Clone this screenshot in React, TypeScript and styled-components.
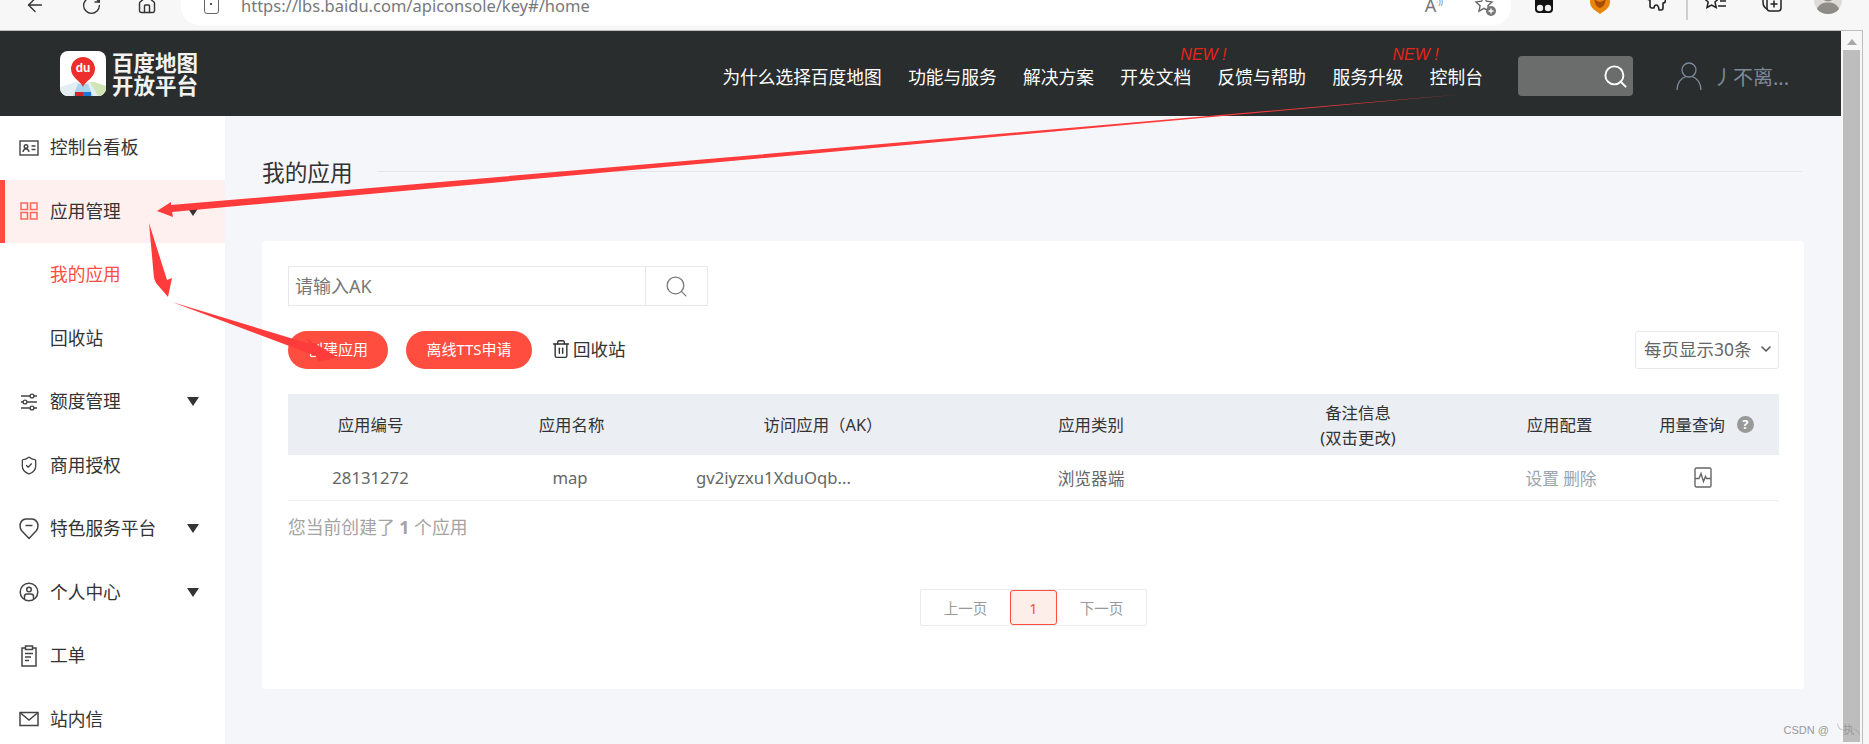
import styled, { createGlobalStyle } from 'styled-components';
import { ArrowLeft, RotateCw, Home, Search, ShieldCheck, Trash2, ChevronDown } from 'lucide-react';

const navItems = [
  { label: '为什么选择百度地图' },
  { label: '功能与服务' },
  { label: '解决方案' },
  { label: '开发文档', isNew: true },
  { label: '反馈与帮助' },
  { label: '服务升级', isNew: true },
  { label: '控制台' },
];

const IdCardIcon = () => (
  <svg width="20" height="20" viewBox="0 0 20 20" fill="none" stroke="#444" strokeWidth="1.4">
    <rect x="1" y="3" width="18" height="14" />
    <circle cx="7" cy="8.5" r="1.8" />
    <path d="M4 14c.4-2.400 1.500-3.200 3-3.200s2.600.8 3 3.200M12.500 8h4M12.500 11.500h4" />
  </svg>
);

const GridIcon = () => (
  <svg width="20" height="20" viewBox="0 0 20 20" fill="none" stroke="#ff6a5c" strokeWidth="1.5">
    <rect x="2" y="2" width="6.500" height="6.500" />
    <rect x="11.500" y="2" width="6.500" height="6.500" />
    <rect x="2" y="11.500" width="6.500" height="6.500" />
    <rect x="11.500" y="11.500" width="6.500" height="6.500" />
  </svg>
);

const SlidersIcon = () => (
  <svg width="20" height="20" viewBox="0 0 20 20" fill="none" stroke="#444" strokeWidth="1.4">
    <path d="M2 4h9M15 4h3M2 10h2M8 10h10M2 16h9M15 16h3" />
    <circle cx="13" cy="4" r="1.900" />
    <circle cx="6" cy="10" r="1.900" />
    <circle cx="13" cy="16" r="1.900" />
  </svg>
);

const TagIcon = () => (
  <svg width="20" height="22" viewBox="0 0 20 22" fill="none" stroke="#444" strokeWidth="1.5">
    <path d="M10 20.500 2.500 12.500C.5 10 .8 6 2 4c1.200-2 3-3 5-3h6c2 0 3.800 1 5 3 1.200 2 1.500 6-.5 8.500z" strokeLinejoin="round" />
    <path d="M6.500 7.500h7" />
  </svg>
);

const UserCircleIcon = () => (
  <svg width="20" height="20" viewBox="0 0 20 20" fill="none" stroke="#444" strokeWidth="1.5">
    <circle cx="10" cy="10" r="8.800" />
    <circle cx="10" cy="7.500" r="2.300" />
    <path d="M5.500 17v-2.500c0-1.500 1-2.500 2.500-2.500h4c1.500 0 2.500 1 2.500 2.500V17" />
  </svg>
);

const ClipboardIcon = () => (
  <svg width="20" height="22" viewBox="0 0 20 22" fill="none" stroke="#444" strokeWidth="1.5">
    <path d="M6.500 3H3v18h14V3h-3.500" />
    <rect x="6.500" y="1" width="7" height="3.500" />
    <path d="M6 8.500h8M6 12h6M6 15.500h4" />
  </svg>
);

const MailIcon = () => (
  <svg width="20" height="20" viewBox="0 0 20 20" fill="none" stroke="#444" strokeWidth="1.5">
    <rect x="1" y="3.500" width="18" height="13" />
    <path d="m1.500 4 8.500 7 8.500-7" />
  </svg>
);

const PulseIcon = () => (
  <svg width="18" height="21" viewBox="0 0 18 21" fill="none" stroke="#666" strokeWidth="1.4">
    <rect x="1" y="1" width="16" height="19" rx="1.500" />
    <path d="M1 11.500h4l2-5 2.500 8 2-5 1 2H17" />
  </svg>
);

const menu = [
  { label: '控制台看板', icon: <IdCardIcon /> },
  { label: '应用管理', icon: <GridIcon />, active: true, caret: true },
  { label: '我的应用', child: true, current: true },
  { label: '回收站', child: true },
  { label: '额度管理', icon: <SlidersIcon />, caret: true },
  { label: '商用授权', icon: <ShieldCheck size={21} color="#444" strokeWidth={1.6} /> },
  { label: '特色服务平台', icon: <TagIcon />, caret: true },
  { label: '个人中心', icon: <UserCircleIcon />, caret: true },
  { label: '工单', icon: <ClipboardIcon /> },
  { label: '站内信', icon: <MailIcon /> },
];

const App = () => {
  return (
    <>
      <GlobalStyle />
      <BrowserBar>
        <BrowserRow>
          <ArrowLeft size={22} color="#333" strokeWidth={1.5} />
          <RotateCw size={21} color="#333" strokeWidth={1.5} />
          <Home size={20} color="#333" strokeWidth={1.7} />
          <AddressPill>
            <AddressLeft>
              <LockBox />
              <UrlText>https://lbs.baidu.com/apiconsole/key#/home</UrlText>
            </AddressLeft>
            <AddressRight>
              <ReadAloud>
                A<sup>ᐧ))</sup>
              </ReadAloud>
              <StarPlus>
                <svg width="24" height="24" viewBox="0 0 24 24" fill="none" stroke="#666" strokeWidth="1.4">
                  <path d="m11 3 2.400 5.200 5.600.7-4.100 3.800 1.100 5.500-5-2.800-5 2.800 1.100-5.500L3 8.900l5.600-.7z" />
                  <circle cx="18" cy="18" r="5" fill="#777" stroke="none" />
                  <path d="M18 15.500v5M15.500 18h5" stroke="#fff" />
                </svg>
              </StarPlus>
            </AddressRight>
          </AddressPill>
          <ExtSlots>
            <ExtSlot>
              <svg width="20" height="22" viewBox="0 0 20 22">
                <rect x="1" y="-6" width="18" height="25" rx="4" fill="#111" />
                <circle cx="6" cy="14" r="3.200" fill="#eee" />
                <circle cx="14" cy="14" r="3.200" fill="#eee" />
              </svg>
            </ExtSlot>
            <ExtSlot>
              <svg width="22" height="22" viewBox="0 0 22 22">
                <path d="M1-4h20v12c0 6-6 9-10 12C7 17 1 14 1 8z" fill="#e8860c" />
                <path d="M5 4c3 5 9 5 12 0-1 7-3 9-6 10-3-1-5-3-6-10z" fill="#a84a08" />
              </svg>
            </ExtSlot>
            <ExtSlot>
              <svg width="20" height="22" viewBox="0 0 20 22" fill="none" stroke="#222" strokeWidth="1.600">
                <path d="M5-2v2c-2.500 0-4 1-4 3s1.500 3 3 3v6c0 1 1 2 2 2h2c0-2 1-3 2.500-3S13 14 13 16h2c1 0 2-1 2-2V9c1.500 0 2.500-1 2.500-2.500S18.500 4 17 4V-2" strokeLinejoin="round" />
              </svg>
            </ExtSlot>
            <ExtDivider />
            <ExtSlot>
              <svg width="22" height="20" viewBox="0 0 22 20" fill="none" stroke="#222" strokeWidth="1.500">
                <path d="M7-2 9 3l5 .5-4 3.500 1.200 5.500L6.500 10 2 12.500 3.200 7-1 3.500 4 3zM14 1h7M15 6h6M13 11h8" />
              </svg>
            </ExtSlot>
            <ExtSlot>
              <svg width="22" height="22" viewBox="0 0 22 22" fill="none" stroke="#222" strokeWidth="1.500">
                <path d="M2-2v10c0 3 2 6 4 7" />
                <rect x="6" y="3" width="14" height="14" rx="3" />
                <path d="M13 6.500v7M9.500 10h7" />
              </svg>
            </ExtSlot>
            <ExtSlot>
              <svg width="28" height="30" viewBox="0 0 28 30">
                <circle cx="14" cy="10" r="14" fill="#dcdbd8" />
                <circle cx="14" cy="5" r="6.500" fill="#8f8c88" />
                <path d="M3 19c2-5 6-6.500 11-6.500S23 14 25 19c-2.500 3.500-6.500 5-11 5S5.500 22.500 3 19z" fill="#8f8c88" />
              </svg>
            </ExtSlot>
          </ExtSlots>
        </BrowserRow>
      </BrowserBar>

      <Frame>
        <Page>
          <Header>
            <Logo>
              <LogoMark>
                <svg width="46" height="45" viewBox="0 0 46 45">
                  <defs>
                    <clipPath id="logoClip">
                      <rect width="46" height="45" rx="8" />
                    </clipPath>
                  </defs>
                  <g clipPath="url(#logoClip)">
                    <rect width="46" height="45" fill="#fff" />
                    <path d="M0 36 16 31h14l16 5v9H0z" fill="#e3eef2" />
                    <path d="M30 31h4l12 4v10H38z" fill="#cfe3b4" />
                    <path d="M18 33h10l5 12H13z" fill="#a9d4ee" />
                    <rect x="15" y="41" width="8" height="4" fill="#d8232a" />
                    <rect x="23" y="41" width="8" height="4" fill="#1e78d8" />
                    <path d="M23 36c-2-6-12-9-12-18a12 12 0 0 1 24 0c0 9-10 12-12 18z" fill="#ee2d2d" />
                    <text x="23" y="21" textAnchor="middle" fill="#fff" fontSize="12" fontWeight="700" fontFamily="Liberation Sans, sans-serif">
                      du
                    </text>
                  </g>
                </svg>
              </LogoMark>
              <LogoText>
                <span>百度地图</span>
                <span>开放平台</span>
              </LogoText>
            </Logo>
            <HeaderRight>
              <Nav>
                {navItems.map((item) => (
                  <NavItem key={item.label}>
                    {item.isNew && <NewBadge>NEW !</NewBadge>}
                    {item.label}
                  </NavItem>
                ))}
              </Nav>
              <HeaderSearch>
                <Search size={27} color="#fff" strokeWidth={1.7} />
              </HeaderSearch>
              <UserBox>
                <svg width="26" height="30" viewBox="0 0 26 30" fill="none" stroke="#7c8a99" strokeWidth="1.3">
                  <circle cx="13" cy="9" r="7" />
                  <path d="M1 29c0-7 4-12 9-13.500M25 29c0-7-4-12-9-13.500" />
                </svg>
                <UserName>丿不离...</UserName>
              </UserBox>
            </HeaderRight>
          </Header>

          <Body>
            <Sidebar>
              {menu.map((item) => (
                <MenuItem key={item.label} $active={item.active}>
                  <MenuIcon>{item.icon}</MenuIcon>
                  <MenuLabel $current={item.current}>{item.label}</MenuLabel>
                  {item.caret && <Caret />}
                </MenuItem>
              ))}
            </Sidebar>

            <Main>
              <TitleRow>
                <PageTitle>我的应用</PageTitle>
                <TitleRule />
              </TitleRow>
              <Card>
                <SearchBox>
                  <SearchInput placeholder="请输入AK" />
                  <SearchButton>
                    <Search size={25} color="#777" strokeWidth={1.2} />
                  </SearchButton>
                </SearchBox>

                <Toolbar>
                  <PrimaryButton $width={100}>创建应用</PrimaryButton>
                  <PrimaryButton $width={126}>离线TTS申请</PrimaryButton>
                  <RecycleLink>
                    <Trash2 size={20} color="#333" strokeWidth={1.7} />
                    回收站
                  </RecycleLink>
                  <PageSize>
                    每页显示30条
                    <ChevronDown size={16} color="#555" strokeWidth={2.4} />
                  </PageSize>
                </Toolbar>

                <TableHead>
                  <span>应用编号</span>
                  <NameHead>应用名称</NameHead>
                  <AkHead>访问应用（AK）</AkHead>
                  <span>应用类别</span>
                  <span>
                    备注信息
                    <br />
                    (双击更改)
                  </span>
                  <ConfigHead>应用配置</ConfigHead>
                  <UsageHead>
                    用量查询
                    <HelpDot>?</HelpDot>
                  </UsageHead>
                </TableHead>
                <TableRow>
                  <span>28131272</span>
                  <span>map</span>
                  <AkCell>gv2iyzxu1XduOqb...</AkCell>
                  <span>浏览器端</span>
                  <span />
                  <ActionCell>设置 删除</ActionCell>
                  <UsageCell>
                    <PulseIcon />
                  </UsageCell>
                </TableRow>

                <Summary>
                  您当前创建了 <b>1</b> 个应用
                </Summary>

                <Pager>
                  <PagerText>上一页</PagerText>
                  <PagerCurrent>1</PagerCurrent>
                  <PagerText>下一页</PagerText>
                </Pager>
              </Card>
            </Main>
          </Body>
        </Page>

        <ScrollTrack>
          <ScrollUp />
          <ScrollThumb />
        </ScrollTrack>
      </Frame>

      <Arrows width="1869" height="744" viewBox="0 0 1869 744">
        <polygon points="1465,94 171,205 171,202 157,211 173,217 172,212" fill="#ff3b3b" />
        <polygon points="149,223 154,278 156,283 168,297 172,278 167,280" fill="#ff3b3b" />
        <polygon points="172,302 310,344 306,338 337,357 318,362 316,356" fill="#ff3b3b" />
      </Arrows>
      <Watermark>CSDN @ ╰执╮</Watermark>
    </>
  );
};

export default App;

const GlobalStyle = createGlobalStyle`
  html, body {
    margin: 0;
    padding: 0;
    width: 1869px;
    height: 744px;
    overflow: hidden;
    background: #f7f7f7;
    font-family: "Noto Sans", "Noto Sans CJK SC", sans-serif;
  }

  * {
    box-sizing: border-box;
  }
`;

const BrowserBar = styled.div`
  height: 30px;
  overflow: hidden;
  background: #f7f7f7;
`;

const BrowserRow = styled.div`
  display: flex;
  align-items: center;
  gap: 35px;
  height: 50px;
  margin-top: -20px;
  padding-left: 24px;
`;

const AddressPill = styled.div`
  display: flex;
  align-items: center;
  justify-content: space-between;
  align-self: flex-start;
  width: 1330px;
  height: 45px;
  margin-left: -11px;
  padding: 5px 14px 0 23px;
  background: #fff;
  border-radius: 0 0 18px 18px;
`;

const AddressLeft = styled.div`
  display: flex;
  align-items: center;
  gap: 22px;
`;

const LockBox = styled.div`
  position: relative;
  width: 15px;
  height: 18px;
  border: 1.5px solid #666;
  border-radius: 3px;

  &::after {
    content: '';
    position: absolute;
    left: 5px;
    top: 6px;
    width: 2px;
    height: 2px;
    background: #555;
  }
`;

const UrlText = styled.span`
  font-size: 16.5px;
  color: #76797c;
  white-space: nowrap;
`;

const AddressRight = styled.div`
  display: flex;
  align-items: center;
  gap: 30px;
`;

const ReadAloud = styled.span`
  font-size: 18px;
  color: #777;

  sup {
    font-size: 8px;
  }
`;

const StarPlus = styled.span`
  display: flex;
`;

const ExtSlots = styled.div`
  display: flex;
  align-items: center;
  margin-left: -30px;
`;

const ExtSlot = styled.div`
  display: flex;
  justify-content: center;
  width: 56px;
`;

const ExtDivider = styled.div`
  width: 2px;
  height: 30px;
  margin: 0 0 0 2px;
  background: #cfcfcf;
`;

const Frame = styled.div`
  display: flex;
  width: 1863px;
  height: 714px;
  border-top: 1px solid #bdbdbd;
  border-right: 1px solid #bdbdbd;
`;

const Page = styled.div`
  width: 1841px;
  flex-shrink: 0;
  overflow: hidden;
`;

const Header = styled.header`
  display: flex;
  align-items: center;
  justify-content: space-between;
  height: 85px;
  padding: 0 52px 0 60px;
  background: #2a2d2e;
`;

const Logo = styled.div`
  display: flex;
  align-items: center;
  gap: 6px;
`;

const LogoMark = styled.div`
  display: flex;
`;

const LogoText = styled.div`
  display: flex;
  flex-direction: column;
  font-size: 21.5px;
  line-height: 23px;
  font-weight: 700;
  color: #f2f2f2;
  white-space: nowrap;
`;

const HeaderRight = styled.div`
  display: flex;
  align-items: center;
  margin-top: 5px;
`;

const Nav = styled.nav`
  display: flex;
  gap: 26.500px;
`;

const NavItem = styled.a`
  position: relative;
  font-size: 17.700px;
  color: #fff;
  white-space: nowrap;
`;

const NewBadge = styled.i`
  position: absolute;
  left: 60px;
  top: -17px;
  font-family: "Liberation Sans", sans-serif;
  font-size: 16px;
  color: #e8231a;
  white-space: nowrap;
`;

const HeaderSearch = styled.div`
  display: flex;
  align-items: center;
  justify-content: flex-end;
  width: 115px;
  height: 40px;
  margin-left: 35px;
  padding-right: 4px;
  background: #6b6d6d;
  border-radius: 4px;
`;

const UserBox = styled.div`
  display: flex;
  align-items: center;
  gap: 11px;
  margin-left: 43px;
`;

const UserName = styled.span`
  font-size: 20px;
  color: #7c8a99;
  white-space: nowrap;
`;

const Body = styled.div`
  display: flex;
  height: 629px;
`;

const Sidebar = styled.aside`
  width: 225px;
  flex-shrink: 0;
  background: #fff;
`;

const MenuItem = styled.div<{ $active?: boolean }>`
  display: flex;
  align-items: center;
  height: 63.500px;
  padding-left: ${(props) => (props.$active ? '14px' : '19px')};
  padding-right: 26px;
  background: ${(props) => (props.$active ? '#fdf0ee' : 'transparent')};
  border-left: ${(props) => (props.$active ? '5px solid #ff4d3f' : 'none')};
`;

const MenuIcon = styled.span`
  display: flex;
  justify-content: center;
  width: 20px;
  margin-right: 11px;
`;

const MenuLabel = styled.span<{ $current?: boolean }>`
  flex: 1;
  padding-bottom: 3px;
  font-size: 17.700px;
  color: ${(props) => (props.$current ? '#ff4d3f' : '#333')};
  white-space: nowrap;
`;

const Caret = styled.span`
  width: 0;
  height: 0;
  border-left: 6.500px solid transparent;
  border-right: 6.500px solid transparent;
  border-top: 9px solid #333;
`;

const Main = styled.main`
  flex: 1;
  padding: 36px 37px 0;
  background: #f5f6fa;
`;

const TitleRow = styled.div`
  display: flex;
  align-items: center;
  height: 42px;
  margin-bottom: 47px;
`;

const PageTitle = styled.h1`
  margin: 0;
  padding-bottom: 4px;
  font-size: 22.700px;
  font-weight: 400;
  color: #333;
`;

const TitleRule = styled.div`
  flex: 1;
  height: 1px;
  margin: -3px 2px 0 25px;
  background: #e4e6ec;
`;

const Card = styled.section`
  height: 448px;
  padding: 25px 25px 0 26px;
  background: #fff;
  border-radius: 4px;
`;

const SearchBox = styled.div`
  display: flex;
  width: 420px;
  height: 40px;
  border: 1px solid #e6e8ee;
`;

const SearchInput = styled.input`
  width: 357px;
  padding: 0 6px;
  font-family: inherit;
  font-size: 18px;
  border: none;
  border-right: 1px solid #e6e8ee;
  outline: none;

  &::placeholder {
    color: #777;
  }
`;

const SearchButton = styled.div`
  display: flex;
  flex: 1;
  align-items: center;
  justify-content: center;
`;

const Toolbar = styled.div`
  display: flex;
  align-items: center;
  height: 38px;
  margin-top: 25px;
`;

const PrimaryButton = styled.button<{ $width: number }>`
  width: ${(props) => props.$width}px;
  height: 38px;
  margin-right: 18px;
  padding: 0 0 3px;
  font-family: inherit;
  font-size: 15px;
  color: #fff;
  background: #ff4d3f;
  border: none;
  border-radius: 19px;
`;

const RecycleLink = styled.span`
  display: flex;
  align-items: center;
  gap: 2px;
  margin-left: 1px;
  padding-bottom: 3px;
  font-size: 17.500px;
  color: #333;
`;

const PageSize = styled.div`
  display: flex;
  align-items: center;
  justify-content: space-between;
  width: 144px;
  height: 38px;
  margin-left: auto;
  padding: 0 4px 3px 8px;
  font-size: 17.500px;
  color: #666;
  border: 1px solid #e6e8ee;
  border-radius: 3px;
  white-space: nowrap;
`;

const columns = '165px 234px 262px 284px 250px 150px 145px';

const TableHead = styled.div`
  display: grid;
  grid-template-columns: ${columns};
  align-items: center;
  height: 61px;
  margin-top: 25px;
  font-size: 16.400px;
  line-height: 25px;
  text-align: center;
  color: #333;
  background: #ebeef3;
`;

const NameHead = styled.span`
  padding-left: 3px;
`;

const AkHead = styled.span`
  padding-left: 10px;
`;

const ConfigHead = styled.span`
  padding-left: 3px;
`;

const UsageHead = styled.span`
  display: flex;
  align-items: center;
  justify-content: center;
  gap: 12px;
  padding-left: 2px;
`;

const HelpDot = styled.span`
  display: flex;
  align-items: center;
  justify-content: center;
  width: 17px;
  height: 17px;
  font-size: 13px;
  font-weight: 700;
  color: #fff;
  background: #999;
  border-radius: 50%;
`;

const TableRow = styled.div`
  display: grid;
  grid-template-columns: ${columns};
  align-items: center;
  height: 46px;
  font-size: 16.700px;
  text-align: center;
  color: #666;
  border-bottom: 1px solid #eef0f3;
`;

const AkCell = styled.span`
  padding-left: 9px;
  text-align: left;
`;

const ActionCell = styled.span`
  padding-left: 6px;
  color: #9aa5b1;
`;

const UsageCell = styled.span`
  display: flex;
  justify-content: center;
  padding-right: 6px;
`;

const Summary = styled.div`
  height: 24px;
  margin-top: 14px;
  font-size: 17.800px;
  line-height: 24px;
  color: #a3a3a3;
`;

const Pager = styled.div`
  display: flex;
  align-items: center;
  width: 227px;
  height: 37px;
  margin: 50px 0 0 632px;
  border: 1px solid #ebebeb;
  border-radius: 2px;
`;

const PagerText = styled.span`
  flex: 1;
  font-size: 14.500px;
  text-align: center;
  color: #999;
`;

const PagerCurrent = styled.span`
  display: flex;
  align-items: center;
  justify-content: center;
  width: 47px;
  height: 35px;
  font-size: 14.500px;
  color: #ff4d3f;
  background: #fdeeea;
  border: 1px solid #ff4d3f;
  border-radius: 3px;
`;

const ScrollTrack = styled.div`
  width: 21px;
  flex-shrink: 0;
  padding: 0 2px;
  background: #f7f7f7;
`;

const ScrollUp = styled.div`
  width: 0;
  height: 0;
  margin: 8px auto 5px;
  border-left: 5px solid transparent;
  border-right: 5px solid transparent;
  border-bottom: 6px solid #a8a8a8;
`;

const ScrollThumb = styled.div`
  height: 692px;
  background: #bdbdbd;
`;

const Arrows = styled.svg`
  position: absolute;
  left: 0;
  top: 0;
  pointer-events: none;
`;

const Watermark = styled.div`
  position: absolute;
  right: 4px;
  top: 721px;
  font-family: "Liberation Sans", "Noto Sans CJK SC", sans-serif;
  font-size: 11px;
  color: #999;
  white-space: nowrap;
`;
